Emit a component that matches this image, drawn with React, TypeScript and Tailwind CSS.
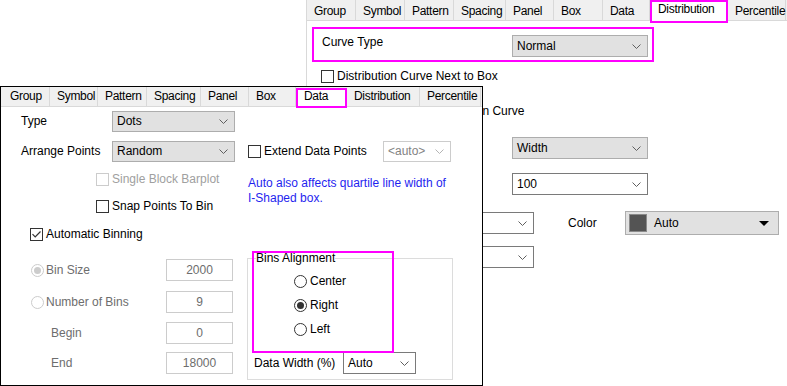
import type { ReactNode } from "react";

type Tone = "gray" | "white" | "off";
type Tab = { label: string; w: string; pad?: string };

const backTabs: Tab[] = [
    { label: "Group", w: "w-[49px]" },
    { label: "Symbol", w: "w-[49px]" },
    { label: "Pattern", w: "w-[49px]" },
    { label: "Spacing", w: "w-[52px]" },
    { label: "Panel", w: "w-[48px]" },
    { label: "Box", w: "w-[49px]" },
    { label: "Data", w: "w-[47px]" },
    { label: "Distribution", w: "w-[78px]" },
    { label: "Percentile", w: "w-[58px]" },
];

const frontTabs: Tab[] = [
    { label: "Group", w: "w-[49px]", pad: "pl-[9px]" },
    { label: "Symbol", w: "w-[48px]" },
    { label: "Pattern", w: "w-[49px]" },
    { label: "Spacing", w: "w-[54px]" },
    { label: "Panel", w: "w-[48px]" },
    { label: "Box", w: "w-[47px]" },
    { label: "Data", w: "w-[51px]" },
    { label: "Distribution", w: "w-[73px]" },
    { label: "Percentile", w: "w-[61px]" },
];

function Chevron({ color = "#5f5f5f" }: { color?: string }) {
    return (
        <svg width="9" height="5" viewBox="0 0 9 5" className="shrink-0">
            <path d="M0.5 0.5L4.5 4.5L8.5 0.5" fill="none" stroke={color} strokeWidth="1" />
        </svg>
    );
}

function Select({ value, className, tone = "gray" }: { value: string; className: string; tone?: Tone }) {
    const skin =
        tone === "gray"
            ? "bg-[#e1e1e1] border-[#adadad]"
            : tone === "white"
              ? "bg-white border-[#7a7a7a]"
              : "bg-white border-[#cccccc] text-[#838383]";
    return (
        <div className={`flex shrink-0 items-center justify-between border pl-[4px] pr-[6px] ${skin} ${className}`}>
            <span>{value}</span>
            <Chevron color={tone === "off" ? "#b4b4b4" : "#5f5f5f"} />
        </div>
    );
}

function Checkbox({ checked, disabled }: { checked?: boolean; disabled?: boolean }) {
    return (
        <span
            className={`flex h-[13px] w-[13px] shrink-0 items-center justify-center border bg-white ${
                disabled ? "border-[#cccccc]" : "border-[#333333]"
            }`}
        >
            {checked && (
                <svg width="9" height="7" viewBox="0 0 9 7">
                    <path d="M0.5 3.2L3.2 6L8.5 0.5" fill="none" stroke="#333333" strokeWidth="1.2" />
                </svg>
            )}
        </span>
    );
}

function Radio({ checked, disabled }: { checked?: boolean; disabled?: boolean }) {
    return (
        <span
            className={`flex h-[13px] w-[13px] shrink-0 items-center justify-center rounded-full border bg-white ${
                disabled ? "border-[#cccccc]" : "border-[#333333]"
            }`}
        >
            {checked && <span className={`h-[7px] w-[7px] rounded-full ${disabled ? "bg-[#cccccc]" : "bg-[#333333]"}`} />}
        </span>
    );
}

function NumBox({ value }: { value: string }) {
    return (
        <div className="flex h-[22px] w-[67px] items-center justify-center border border-[#cccccc] bg-white text-[#6d6d6d]">
            {value}
        </div>
    );
}

function BackTabs({ active }: { active: string }) {
    return (
        <div className="flex h-[21px] items-start border-b border-[#d9d9d9] bg-[#f0f0f0] tracking-[-0.3px]">
            {backTabs.map((t) =>
                t.label === active ? (
                    <div key={t.label} className={`relative z-10 h-[23px] border-2 border-[#ff00ff] bg-white pl-[6px] ${t.w}`}>
                        {t.label}
                    </div>
                ) : (
                    <div key={t.label} className={`h-full border-r border-[#d9d9d9] pl-[7px] pt-[4px] ${t.w}`}>
                        {t.label}
                    </div>
                ),
            )}
        </div>
    );
}

function FrontTabs({ active }: { active: string }) {
    return (
        <div className="flex h-[20px] items-start border-b border-[#d9d9d9] bg-[#f0f0f0] tracking-[-0.3px]">
            {frontTabs.map((t) =>
                t.label === active ? (
                    <div
                        key={t.label}
                        className={`relative z-10 mt-[1px] h-[20px] border-2 border-[#ff00ff] bg-white pl-[6px] leading-[12px] ${t.w}`}
                    >
                        {t.label}
                    </div>
                ) : (
                    <div key={t.label} className={`h-full border-r border-[#d9d9d9] pt-[2px] ${t.pad ?? "pl-[7px]"} ${t.w}`}>
                        {t.label}
                    </div>
                ),
            )}
        </div>
    );
}

function Row({ children, className }: { children: ReactNode; className: string }) {
    return <div className={`flex items-center ${className}`}>{children}</div>;
}

function DistributionPanel() {
    return (
        <div className="absolute left-[306px] top-0 h-[386px] w-[481px] border-l border-[#d9d9d9] bg-white">
            <BackTabs active="Distribution" />

            <div className="ml-[5px] mt-[6px] flex h-[35px] w-[342px] items-start border-2 border-[#ff00ff] pl-[8px] pt-[6px]">
                <span className="w-[190px]">Curve Type</span>
                <Select value="Normal" className="h-[22px] w-[136px]" />
            </div>

            <Row className="ml-[14px] mt-[7px] h-[15px] gap-[3px]">
                <Checkbox />
                <span>Distribution Curve Next to Box</span>
            </Row>
            <Row className="ml-[14px] mt-[20px] h-[15px] gap-[3px]">
                <Checkbox />
                <span>Scale Width with Distribution Curve</span>
            </Row>

            {/* labels of these rows sit under the Data panel, only the controls show */}
            <Row className="ml-[205px] mt-[18px] h-[22px]">
                <Select value="Width" className="h-[22px] w-[136px]" />
            </Row>
            <Row className="ml-[205px] mt-[14px] h-[22px]">
                <Select value="100" tone="white" className="h-[22px] w-[136px]" />
            </Row>

            <Row className="ml-[105px] mt-[16px] h-[24px]">
                <Select value="" tone="white" className="h-[22px] w-[122px]" />
                <span className="ml-[34px] w-[57px]">Color</span>
                <div className="flex h-[24px] w-[154px] items-center border border-[#adadad] bg-[#e1e1e1] pl-[3px] pr-[9px]">
                    <span className="h-[18px] w-[18px] border border-[#8a8a8a] bg-[#545454]" />
                    <span className="ml-[7px] flex-1">Auto</span>
                    <svg width="10" height="5" viewBox="0 0 10 5">
                        <path d="M0 0H10L5 5Z" fill="#000000" />
                    </svg>
                </div>
            </Row>
            <Row className="ml-[105px] mt-[11px] h-[22px]">
                <Select value="" tone="white" className="h-[22px] w-[122px]" />
            </Row>
        </div>
    );
}

function DataPanel() {
    return (
        <div className="absolute left-0 top-[86px] h-[300px] w-[483px] border border-black bg-white">
            <FrontTabs active="Data" />

            <Row className="mt-[4px] h-[21px] pl-[20px]">
                <span className="w-[91px]">Type</span>
                <Select value="Dots" className="h-[21px] w-[123px]" />
            </Row>
            <Row className="mt-[9px] h-[21px] pl-[20px]">
                <span className="w-[91px]">Arrange Points</span>
                <Select value="Random" className="h-[21px] w-[123px]" />
                <span className="ml-[13px]">
                    <Checkbox />
                </span>
                <span className="ml-[3px] w-[119px]">Extend Data Points</span>
                <Select value="<auto>" tone="off" className="h-[21px] w-[68px]" />
            </Row>

            <div className="flex">
                <div className="w-[246px]">
                    <Row className="mt-[10px] h-[15px] gap-[3px] pl-[95px] text-[#a0a0a0]">
                        <Checkbox disabled />
                        <span>Single Block Barplot</span>
                    </Row>
                    <Row className="mt-[12px] h-[15px] gap-[3px] pl-[95px]">
                        <Checkbox />
                        <span>Snap Points To Bin</span>
                    </Row>
                    <Row className="mt-[13px] h-[15px] gap-[3px] pl-[29px]">
                        <Checkbox checked />
                        <span>Automatic Binning</span>
                    </Row>

                    <Row className="mt-[17px] h-[22px] pl-[30px] text-[#6d6d6d]">
                        <div className="flex w-[135px] items-center gap-[2px]">
                            <Radio checked disabled />
                            <span>Bin Size</span>
                        </div>
                        <NumBox value="2000" />
                    </Row>
                    <Row className="mt-[10px] h-[22px] pl-[30px] text-[#6d6d6d]">
                        <div className="flex w-[135px] items-center gap-[2px]">
                            <Radio disabled />
                            <span>Number of Bins</span>
                        </div>
                        <NumBox value="9" />
                    </Row>
                    <Row className="mt-[9px] h-[22px] pl-[30px] text-[#6d6d6d]">
                        <span className="w-[135px] pl-[20px]">Begin</span>
                        <NumBox value="0" />
                    </Row>
                    <Row className="mt-[8px] h-[22px] pl-[30px] text-[#6d6d6d]">
                        <span className="w-[135px] pl-[20px]">End</span>
                        <NumBox value="18000" />
                    </Row>
                </div>

                <div className="flex-1">
                    <p className="mt-[14px] pl-[1px] text-[#1f1fef]">
                        Auto also affects quartile line width of
                        <br />
                        I-Shaped box.
                    </p>

                    <div className="relative mt-[45px] w-[206px]">
                        <fieldset className="border border-[#dcdcdc] pb-[5px]">
                            <legend className="ml-[8px]">Bins Alignment</legend>
                            <div className="mt-[3px] pl-[46px]">
                                {["Center", "Right", "Left"].map((label) => (
                                    <Row key={label} className="h-[24px] gap-[3px]">
                                        <Radio checked={label === "Right"} />
                                        <span>{label}</span>
                                    </Row>
                                ))}
                            </div>
                            <Row className="mt-[11px] h-[22px] pl-[6px]">
                                <span className="w-[89px]">Data Width (%)</span>
                                <Select value="Auto" tone="white" className="h-[22px] w-[73px]" />
                            </Row>
                        </fieldset>
                        <div className="absolute left-[5px] top-0 h-[102px] w-[142px] border-2 border-[#ff00ff]" />
                    </div>
                </div>
            </div>
        </div>
    );
}

export default function App() {
    return (
        <div className="relative h-[386px] w-[787px] overflow-hidden bg-white font-['Liberation_Sans',Arial,sans-serif] text-[12px] leading-[15px] text-black">
            <DistributionPanel />
            <DataPanel />
        </div>
    );
}
